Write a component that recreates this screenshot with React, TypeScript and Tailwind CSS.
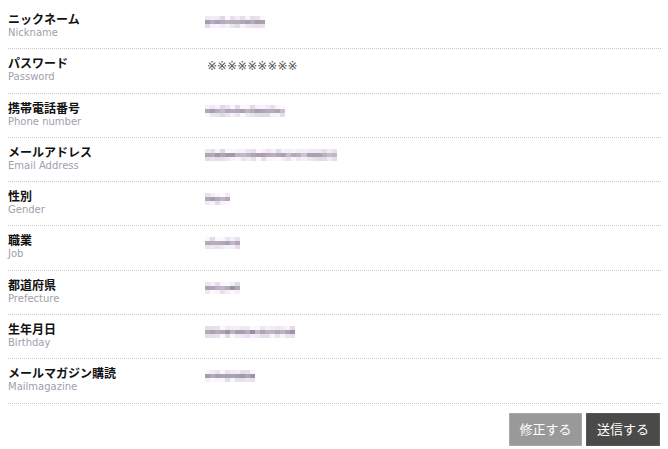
import React from 'react';

interface Field {
  ja: string;
  en: string;
  blob?: number; // width of the pixelated value
  text?: string;
}

const fields: Field[] = [
  { ja: 'ニックネーム', en: 'Nickname', blob: 60 },
  { ja: 'パスワード', en: 'Password', text: '※※※※※※※※※' },
  { ja: '携帯電話番号', en: 'Phone number', blob: 80 },
  { ja: 'メールアドレス', en: 'Email Address', blob: 132 },
  { ja: '性別', en: 'Gender', blob: 25 },
  { ja: '職業', en: 'Job', blob: 35 },
  { ja: '都道府県', en: 'Prefecture', blob: 35 },
  { ja: '生年月日', en: 'Birthday', blob: 90 },
  { ja: 'メールマガジン購読', en: 'Mailmagazine', blob: 50 },
];

// simple seeded random so the mosaic looks the same on every render
function rng(seed: number) {
  let s = seed;
  return () => {
    s = (s * 9301 + 49297) % 233280;
    return s / 233280;
  };
}

function Mosaic({ width, seed }: { width: number; seed: number }) {
  const rand = rng(seed);
  const cols = Math.max(2, Math.round(width / 5));
  const rows = 3;
  const cells = [];
  for (let r = 0; r < rows; r++) {
    for (let c = 0; c < cols; c++) {
      const base = r === 1 ? 170 : 222;
      const v = Math.round(base + rand() * 30 - (r === 1 ? rand() * 25 : 0));
      const tint = Math.round(rand() * 16);
      cells.push(
        <div
          key={`${r}-${c}`}
          style={{ background: `rgb(${v + tint - 6}, ${v - 4}, ${v + tint})` }}
        />,
      );
    }
  }
  return (
    <div
      className="grid h-[12px]"
      style={{ width, gridTemplateColumns: `repeat(${cols}, 1fr)`, gridTemplateRows: `repeat(${rows}, 1fr)` }}
    >
      {cells}
    </div>
  );
}

export default function App() {
  return (
    <div className="w-[668px] h-[449px] bg-white pt-[5px] pl-[8px] pr-[7px] font-['Noto_Sans_CJK_JP',sans-serif]">
      <div>
        {fields.map((f, i) => (
          <div
            key={f.en}
            className="flex h-[44.3px] border-b border-dotted border-[#c8c8c8]"
          >
            <div className="w-[197px] pt-[6px] flex flex-col">
              <span className="text-[12px] leading-[15px] font-semibold text-[#111]">{f.ja}</span>
              <span className="text-[10px] leading-[13px] text-[#a0a0ac] font-['DejaVu_Sans',sans-serif]">
                {f.en}
              </span>
            </div>
            <div className="pt-[11px]">
              {f.text ? (
                <span className="block -mt-[3px] ml-[2px] text-[12px] text-[#555] font-['DejaVu_Sans',sans-serif]">
                  {f.text}
                </span>
              ) : (
                <Mosaic width={f.blob ?? 40} seed={i * 17 + 5} />
              )}
            </div>
          </div>
        ))}
      </div>
      <div className="flex justify-end gap-[4px] mt-[9px] pr-[1px]">
        <button className="w-[73px] h-[33px] bg-[#999] border border-[#aaa] text-white text-[13px]">
          修正する
        </button>
        <button className="w-[74px] h-[33px] bg-[#4a4b48] border border-[#5a5a58] text-white text-[13px]">
          送信する
        </button>
      </div>
    </div>
  );
}
